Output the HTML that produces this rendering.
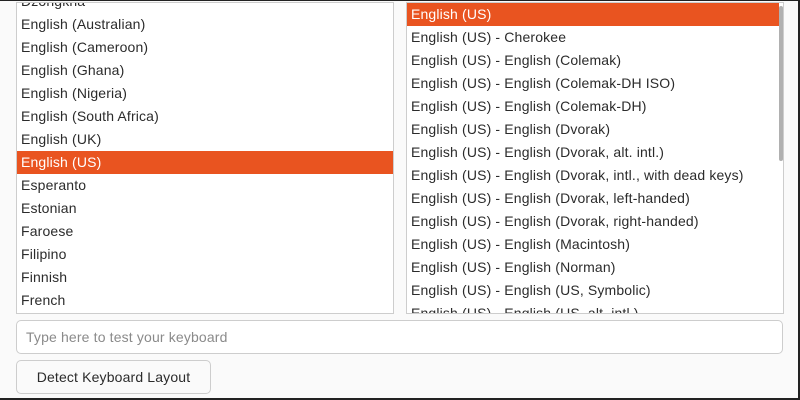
<!DOCTYPE html>
<html><head><style>
*{box-sizing:border-box;margin:0;padding:0}
body{width:800px;height:400px;background:#fafafa;font-family:"Liberation Sans","DejaVu Sans",sans-serif;font-size:14px;letter-spacing:0.15px;color:#2b2b2b;position:relative;overflow:hidden}
.frame{position:absolute;left:0;top:0;width:800px;height:400px;border-top:1px solid #222;border-right:2px solid #222;border-bottom:2px solid #222;pointer-events:none}
.list{position:absolute;top:2px;height:312px;background:#fff;border:1px solid #cdcdcd;overflow:hidden}
.row{position:absolute;left:0;right:0;height:23px;line-height:23px;padding-left:4px;white-space:nowrap}
.sel{background:#e95420;color:#fff}
.sb{position:absolute;left:372px;top:3px;width:4px;height:155px;background:#b0b0b0;border-radius:2px}
.inp{position:absolute;left:16px;top:320px;width:767px;height:34px;border:1px solid #cdcdcd;border-radius:5px;background:#fff;line-height:32px;padding-left:9px;color:#8a8a8a}
.btn{position:absolute;left:16px;top:360px;width:195px;height:34px;border:1px solid #cdcdcd;border-radius:5px;background:#fafafa;line-height:32px;text-align:center;color:#2b2b2b}
</style></head><body>
<div class="list" style="left:16px;width:378px">
<div class="row" style="top:-13px">Dzongkha</div>
<div class="row" style="top:10px">English (Australian)</div>
<div class="row" style="top:33px">English (Cameroon)</div>
<div class="row" style="top:56px">English (Ghana)</div>
<div class="row" style="top:79px">English (Nigeria)</div>
<div class="row" style="top:102px">English (South Africa)</div>
<div class="row" style="top:125px">English (UK)</div>
<div class="row sel" style="top:148px">English (US)</div>
<div class="row" style="top:171px">Esperanto</div>
<div class="row" style="top:194px">Estonian</div>
<div class="row" style="top:217px">Faroese</div>
<div class="row" style="top:240px">Filipino</div>
<div class="row" style="top:263px">Finnish</div>
<div class="row" style="top:286px">French</div>
</div>
<div class="list" style="left:406px;width:378px">
<div class="row sel" style="top:0px;right:4px">English (US)</div>
<div class="row" style="top:23px">English (US) - Cherokee</div>
<div class="row" style="top:46px">English (US) - English (Colemak)</div>
<div class="row" style="top:69px">English (US) - English (Colemak-DH ISO)</div>
<div class="row" style="top:92px">English (US) - English (Colemak-DH)</div>
<div class="row" style="top:115px">English (US) - English (Dvorak)</div>
<div class="row" style="top:138px">English (US) - English (Dvorak, alt. intl.)</div>
<div class="row" style="top:161px">English (US) - English (Dvorak, intl., with dead keys)</div>
<div class="row" style="top:184px">English (US) - English (Dvorak, left-handed)</div>
<div class="row" style="top:207px">English (US) - English (Dvorak, right-handed)</div>
<div class="row" style="top:230px">English (US) - English (Macintosh)</div>
<div class="row" style="top:253px">English (US) - English (Norman)</div>
<div class="row" style="top:276px">English (US) - English (US, Symbolic)</div>
<div class="row" style="top:299px">English (US) - English (US, alt. intl.)</div>
<div class="sb"></div>
</div>
<div class="inp">Type here to test your keyboard</div>
<div class="btn">Detect Keyboard Layout</div>
<div class="frame"></div>
</body></html>
